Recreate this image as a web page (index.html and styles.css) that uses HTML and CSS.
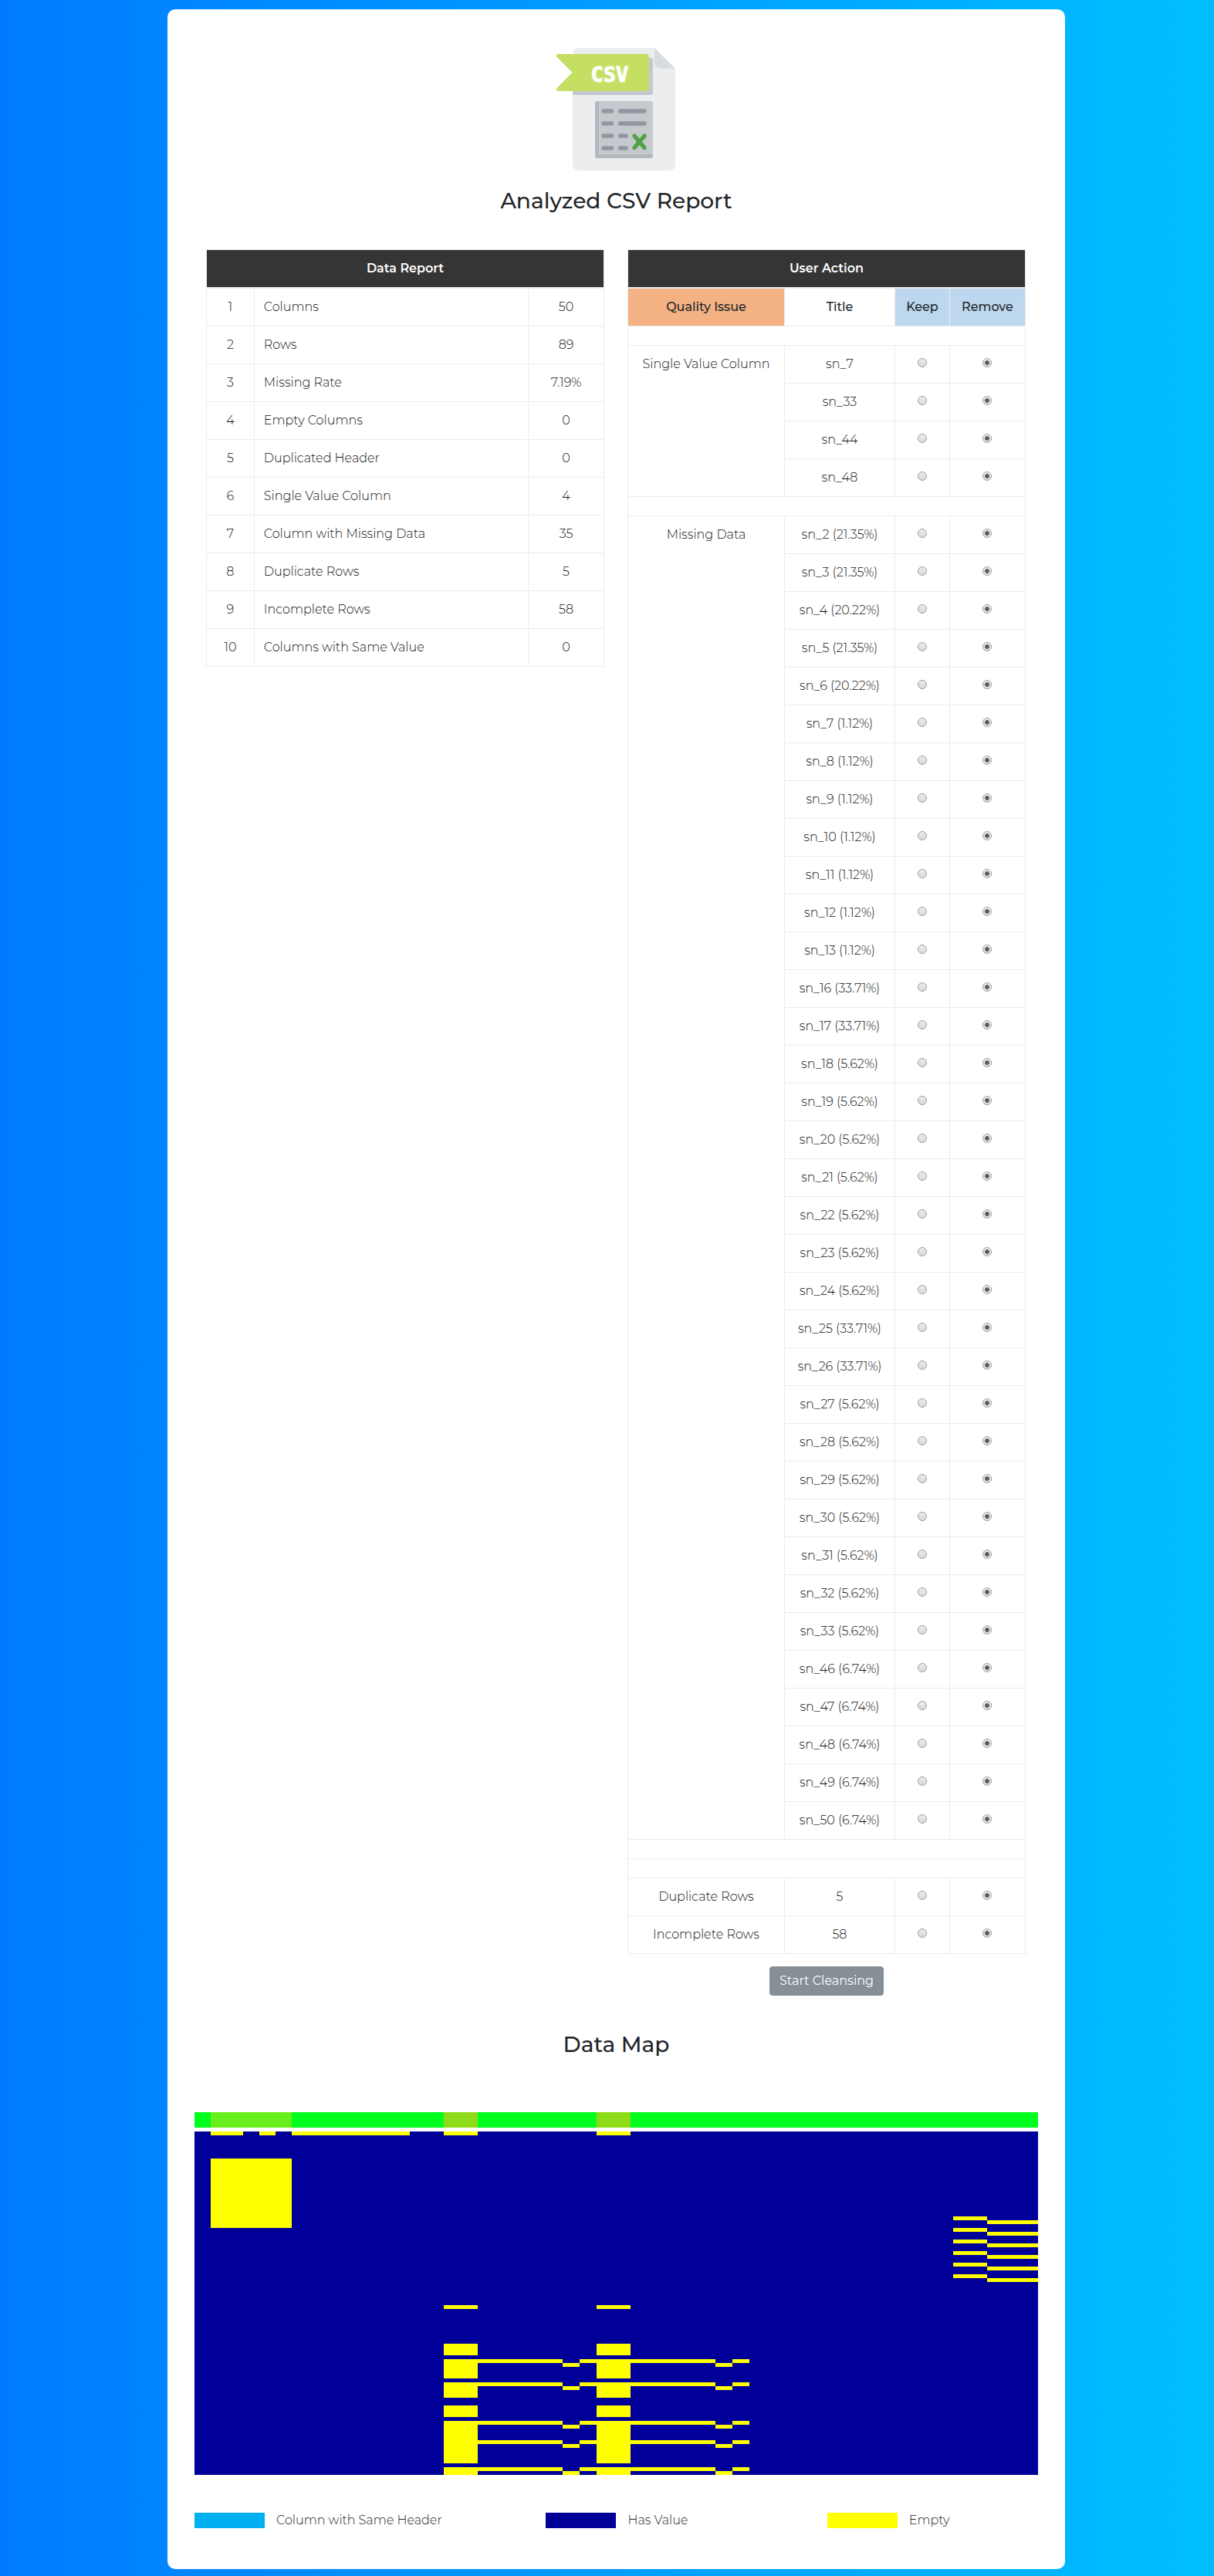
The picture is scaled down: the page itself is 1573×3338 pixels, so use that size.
FILE: index.html
```html
<!DOCTYPE html>
<html lang="en">
<head>
<meta charset="utf-8">
<meta name="viewport" content="width=device-width, initial-scale=1">
<title>Analyzed CSV Report</title>
<link rel="stylesheet" href="styles.css">
<script src="app.js" defer></script>
</head>
<body>
<main class="card">
  <header class="report-header">
    <svg class="csv-icon" viewBox="0 0 160 160" role="img" aria-label="CSV file">
      <path fill="#ebedef" d="M30 0H129L156 27V151a8 8 0 0 1-8 8H31a8 8 0 0 1-8-8V7a7 7 0 0 1 7-7z"/>
      <path fill="#d8dcdf" d="M129 0L156 27H137a8 8 0 0 1-8-8z"/>
      <path fill="#c5c8cd" d="M23 50H119V13h5a3 3 0 0 1 3 3V58a3 3 0 0 1-3 3H23z"/>
      <path fill="#c5df63" d="M4.500 8H119a2.500 2.500 0 0 1 2.500 2.500V53.500a2.500 2.500 0 0 1-2.500 2.500H4.500c-2.500 0-3.500-2.500-1.700-4.300L22.500 32 2.800 12.300C1 10.500 2 8 4.500 8z"/>
      <text class="csv-icon-text" x="71" y="44" text-anchor="middle">CSV</text>
      <rect x="52" y="69" width="75" height="74" rx="3" fill="#b2b7be"/>
      <path fill="#c5c8cd" d="M57 69H124a3 3 0 0 1 3 3V138H57z"/>
      <path fill="none" stroke="#9196a1" stroke-width="5.400" stroke-linecap="round" d="M63 82H73.500M84.500 82h31.500M63 98H73.500M84.500 98h31.500M63 114H73.500M84.500 114h7.500M63 130H73.500M84.500 130h7.500"/>
      <path fill="none" stroke="#53a145" stroke-width="5.400" stroke-linecap="round" d="M103 114L116 129.500M116 114L103 129.500"/>
    </svg>
    <h1 class="title">Analyzed CSV Report</h1>
  </header>

  <div class="tables">
    <section>
      <table class="grid-table">
        <colgroup><col class="col-no"><col class="col-metric"><col class="col-amount"></colgroup>
        <thead>
          <tr><th class="banner" colspan="3">Data Report</th></tr>
        </thead>
        <tbody>
          <tr><td>1</td><td class="metric">Columns</td><td>50</td></tr>
          <tr><td>2</td><td class="metric">Rows</td><td>89</td></tr>
          <tr><td>3</td><td class="metric">Missing Rate</td><td>7.19%</td></tr>
          <tr><td>4</td><td class="metric">Empty Columns</td><td>0</td></tr>
          <tr><td>5</td><td class="metric">Duplicated Header</td><td>0</td></tr>
          <tr><td>6</td><td class="metric">Single Value Column</td><td>4</td></tr>
          <tr><td>7</td><td class="metric">Column with Missing Data</td><td>35</td></tr>
          <tr><td>8</td><td class="metric">Duplicate Rows</td><td>5</td></tr>
          <tr><td>9</td><td class="metric">Incomplete Rows</td><td>58</td></tr>
          <tr><td>10</td><td class="metric">Columns with Same Value</td><td>0</td></tr>
        </tbody>
      </table>
    </section>

    <form class="action-form">
      <table class="grid-table" id="actions">
        <colgroup><col class="col-issue"><col class="col-title"><col class="col-keep"><col class="col-remove"></colgroup>
        <thead>
          <tr><th class="banner" colspan="4">User Action</th></tr>
          <tr><th class="issue-head">Quality Issue</th><th>Title</th><th class="choice-head">Keep</th><th class="choice-head">Remove</th></tr>
        </thead>
      </table>
      <button class="btn" type="button">Start Cleansing</button>
    </form>
  </div>

  <section class="map">
    <h2 class="title">Data Map</h2>
    <svg class="map-plot" viewBox="0 0 1093 470" preserveAspectRatio="none" shape-rendering="crispEdges" role="img" aria-label="Map of empty and filled cells">
      <path fill="#00ff1e" d="M0 0H1093V20H0z"/>
      <path fill="#68ee1a" d="M21 0H126V20H21z"/>
      <path fill="#8edc19" d="M323 0h44v20h-44zM521 0h44v20h-44z"/>
      <path fill="#000099" d="M0 25H1093V470H0z"/>
      <g fill="#ffff00" transform="translate(0 25)">
        <path d="M21 0h42v5h-42zM84 0h21v5h-21zM126 0h153v5h-153zM21 35h105v90h-105z"/>
        <g id="pattern">
          <path d="M323 0h44v5h-44zM323 225h44v5h-44zM323 275h44v15h-44zM323 295h44v25h-44zM323 325h44v20h-44zM323 355h44v15h-44zM323 375h44v55h-44zM323 435h44v10h-44z"/>
          <path d="M367 295h110v5h-110zM477 300h22v5h-22zM499 295h22v5h-22z"/>
          <path d="M367 325h110v5h-110zM477 330h22v5h-22zM499 325h22v5h-22z"/>
          <path d="M367 375h110v5h-110zM477 380h22v5h-22zM499 375h22v5h-22z"/>
          <path d="M367 400h110v5h-110zM477 405h22v5h-22zM499 400h22v5h-22z"/>
          <path d="M367 435h110v5h-110zM477 440h22v5h-22zM499 435h22v5h-22z"/>
        </g>
        <use href="#pattern" x="198"/>
        <path d="M983 110h44v5h-44zM983 125h44v5h-44zM983 140h44v5h-44zM983 155h44v5h-44zM983 170h44v5h-44zM983 185h44v5h-44z"/>
        <path d="M1027 115h66v5h-66zM1027 130h66v5h-66zM1027 145h66v5h-66zM1027 160h66v5h-66zM1027 175h66v5h-66zM1027 190h66v5h-66z"/>
      </g>
    </svg>
    <ul class="legend">
      <li><span class="swatch swatch-same"></span>Column with Same Header</li>
      <li><span class="swatch swatch-value"></span>Has Value</li>
      <li><span class="swatch swatch-empty"></span>Empty</li>
    </ul>
  </section>
</main>
</body>
</html>
```
FILE: styles.css
```css
* { box-sizing: border-box; }

body {
  margin: 0;
  padding: 12px 193px 9px 217px;
  background: linear-gradient(to right, #007bff, #00bfff);
  color: #212529;
  font: 300 16px/24px Montserrat, Inter, sans-serif;
}

.card {
  background: #fff;
  border-radius: 10px;
  padding: 50px 0;
}

.report-header {
  display: flex;
  flex-direction: column;
  align-items: center;
  gap: 21px;
}

.csv-icon { width: 160px; height: 160px; }

.csv-icon-text {
  font: bold 27px "DejaVu Sans Mono", monospace;
  fill: #fff;
  stroke: #fff;
  stroke-width: 1px;
}

.title {
  margin: 0;
  font-size: 28px;
  line-height: 34px;
  font-weight: 500;
  text-align: center;
}

.tables {
  display: grid;
  grid-template-columns: 1fr 1fr;
  align-items: start;
  gap: 30px;
  padding: 46px 51px 0 50px;
}

.grid-table {
  width: 100%;
  table-layout: fixed;
  border-collapse: collapse;
  text-align: center;
}

.grid-table th,
.grid-table td {
  height: 49px;
  padding: 12px 0;
  border: 1px solid #e9ecef;
  vertical-align: top;
}

.grid-table td { color: #101214; }

.grid-table th { font-weight: 500; }

.grid-table .banner {
  background: #353535;
  border-bottom-width: 2px;
  color: #fff;
  font-weight: 600;
}

.grid-table .metric { padding-left: 12px; text-align: left; }
.grid-table .issue-head { background: #f4b183; }
.grid-table .choice-head { background: #bdd7ee; }
.grid-table .spacer { height: 25px; }

.col-no { width: 12%; }
.col-metric { width: 69%; }
.col-amount { width: 19%; }
.col-issue { width: 203px; }
.col-title { width: 143px; }
.col-keep { width: 71px; }
.col-remove { width: 98px; }

.radio {
  appearance: none;
  display: block;
  width: 12px;
  height: 12px;
  margin: 4px auto 0;
  border: 1px solid #a0a0a0;
  border-radius: 50%;
  background: linear-gradient(#ececec, #d9d9d9);
}

.radio:checked {
  background: radial-gradient(circle closest-side, #5c5c5c 50%, transparent 65%), linear-gradient(#ececec, #dedede);
}

.action-form {
  display: flex;
  flex-direction: column;
  align-items: center;
  gap: 16px;
}

.btn {
  padding: 6px 12px;
  border: 1px solid #868e96;
  border-radius: 4px;
  background: #868e96;
  color: #fff;
  font: inherit;
  font-weight: 400;
}

.map { padding: 46px 35px 0; }

.map-plot {
  display: block;
  width: 100%;
  height: 470px;
  margin-top: 71px;
}

.legend {
  display: grid;
  grid-template-columns: 5fr 4fr 3fr;
  margin: 47px 0 0;
  padding: 0 0 1px;
  list-style: none;
}

.legend li { display: flex; align-items: center; gap: 15px; }
.swatch { width: 91px; height: 20px; }
.swatch-same { background: #00b0f0; }
.swatch-value { background: #000099; }
.swatch-empty { background: #ffff00; }
```
FILE: app.js
```js
// Quality issues: each group lists the titles that share one issue.
const groups = [
  { spacers: 1, rows: [["Single Value Column", ["sn_7", "sn_33", "sn_44", "sn_48"]]] },
  { spacers: 1, rows: [["Missing Data", [
    "sn_2 (21.35%)", "sn_3 (21.35%)", "sn_4 (20.22%)", "sn_5 (21.35%)", "sn_6 (20.22%)",
    "sn_7 (1.12%)", "sn_8 (1.12%)", "sn_9 (1.12%)", "sn_10 (1.12%)", "sn_11 (1.12%)",
    "sn_12 (1.12%)", "sn_13 (1.12%)", "sn_16 (33.71%)", "sn_17 (33.71%)", "sn_18 (5.62%)",
    "sn_19 (5.62%)", "sn_20 (5.62%)", "sn_21 (5.62%)", "sn_22 (5.62%)", "sn_23 (5.62%)",
    "sn_24 (5.62%)", "sn_25 (33.71%)", "sn_26 (33.71%)", "sn_27 (5.62%)", "sn_28 (5.62%)",
    "sn_29 (5.62%)", "sn_30 (5.62%)", "sn_31 (5.62%)", "sn_32 (5.62%)", "sn_33 (5.62%)",
    "sn_46 (6.74%)", "sn_47 (6.74%)", "sn_48 (6.74%)", "sn_49 (6.74%)", "sn_50 (6.74%)"]]] },
  { spacers: 2, rows: [["Duplicate Rows", ["5"]], ["Incomplete Rows", ["58"]]] },
];

let html = "";
for (const group of groups) {
  html += "<tbody>" + '<tr><td class="spacer" colspan="4"></td></tr>'.repeat(group.spacers);
  for (const [issue, titles] of group.rows) {
    titles.forEach((title, i) => {
      const name = `${issue} ${title}`;
      const head = i === 0 ? `<td rowspan="${titles.length}">${issue}</td>` : "";
      html += `<tr>${head}<td>${title}</td>` +
        `<td><input class="radio" type="radio" name="${name}" value="keep" aria-label="Keep ${name}"></td>` +
        `<td><input class="radio" type="radio" name="${name}" value="remove" aria-label="Remove ${name}" checked></td></tr>`;
    });
  }
  html += "</tbody>";
}
document.getElementById("actions").insertAdjacentHTML("beforeend", html);
```
